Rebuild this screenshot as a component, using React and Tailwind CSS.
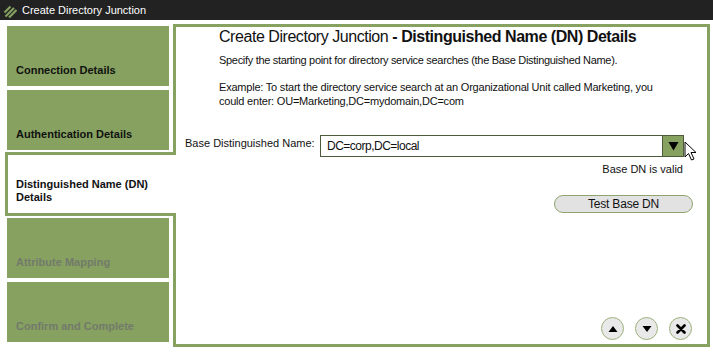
import React from "react";

const F = { fontFamily: '"Liberation Sans", Arial, sans-serif' };

function Logo() {
  return (
    <svg width="15" height="15" viewBox="0 0 15 15" className="shrink-0">
      <g stroke="#86a160" strokeWidth="2.2" strokeLinecap="butt">
        <path d="M1.5 9.5 L7.5 3.5" />
        <path d="M2.5 13.5 L11 5" />
        <path d="M6 14.5 L13.5 7" />
      </g>
    </svg>
  );
}

function Tab({ label, disabled }) {
  return (
    <div
      className={`w-[162px] h-[60px] ml-[2px] bg-[#86a160] flex items-end pl-[9px] pb-[9px] text-[11px] font-bold leading-[13px] ${
        disabled ? "text-[#737a6b]" : "text-[#111]"
      }`}
    >
      {label}
    </div>
  );
}

function Circle({ children }) {
  return (
    <div className="w-[23px] h-[23px] rounded-full bg-[#e9e9e9] border-[1.5px] border-[#9cb27c] flex items-center justify-center">
      {children}
    </div>
  );
}

export default function App() {
  return (
    <div className="w-[713px] h-[353px] bg-white overflow-hidden relative" style={F}>
      <div className="h-[20px] bg-[#222222] flex items-center pl-[3px] gap-[4px]">
        <Logo />
        <span className="text-white text-[11px] leading-none">Create Directory Junction</span>
      </div>
      <div className="flex">
        <div className="w-[168px] ml-[5px] shrink-0 pt-[6px] flex flex-col">
          <Tab label="Connection Details" />
          <div className="h-[4px]" />
          <Tab label="Authentication Details" />
          <div className="mt-[2px] w-[171px] h-[64px] relative z-10 bg-white border-[3px] border-r-0 border-[#86a160] flex items-end pl-[8px] pb-[9px] text-[11px] font-bold leading-[13px] text-[#111]">
            Distinguished Name (DN)
            <br />
            Details
          </div>
          <div className="h-[2px]" />
          <Tab label="Attribute Mapping" disabled />
          <div className="h-[4px]" />
          <Tab label="Confirm and Complete" disabled />
        </div>
        <div className="mt-[4px] w-[537px] h-[323px] border-[3px] border-[#86a160] flex flex-col text-[#111]">
          <div className="pl-[43px] pt-[1px] text-[16px] leading-[18px] tracking-[-0.45px]">
            Create Directory Junction <span className="font-bold">- Distinguished Name (DN) Details</span>
          </div>
          <div className="pl-[43px] mt-[7px] text-[11px] leading-[14px] tracking-[-0.31px]">
            Specify the starting point for directory service searches (the Base Distinguished Name).
          </div>
          <div className="pl-[43px] mt-[13px] text-[11px] leading-[14px] tracking-[-0.21px]">
            Example: To start the directory service search at an Organizational Unit called Marketing, you
            <br />
            could enter: OU=Marketing,DC=mydomain,DC=com
          </div>
          <div className="ml-[9px] w-[499px] mt-[27px]">
            <div className="flex items-start">
              <div className="w-[135px] text-[11px] leading-[14px] pt-[1px]">Base Distinguished Name:</div>
              <div className="flex-1 h-[22px] border border-[#4d5a3c] flex relative">
                <div className="flex-1 pl-[6px] text-[12px] leading-[20px] tracking-[-0.5px]">DC=corp,DC=local</div>
                <div className="w-[21px] h-full bg-[#86a160] border-l border-[#4d5a3c] flex items-center justify-center">
                  <svg width="11" height="10" viewBox="0 0 11 10">
                    <path d="M0.5 1 L10.5 1 L5.5 9.5 Z" fill="#000" />
                  </svg>
                </div>
                <svg
                  width="15"
                  height="22"
                  viewBox="0 0 15 22"
                  className="absolute left-[363px] top-[5px]"
                >
                  <path
                    d="M1 1 L1 16 L4.5 12.5 L7.5 19 L10 18 L7 11.5 L12 11.5 Z"
                    fill="#fff"
                    stroke="#000"
                    strokeWidth="1"
                    strokeLinejoin="round"
                  />
                </svg>
              </div>
            </div>
            <div className="mt-[5px] text-right text-[11px] leading-[14px] pr-[1px]">Base DN is valid</div>
            <div className="mt-[19px] flex justify-end mr-[-9px]">
              <div className="w-[139px] h-[18px] rounded-full bg-[#e2e2e2] border border-[#8fa56e] flex items-center justify-center text-[12px] leading-none tracking-[-0.2px]">
                Test Base DN
              </div>
            </div>
          </div>
          <div className="mt-auto mb-[4px] mr-[15px] flex justify-end gap-[11px]">
            <Circle>
              <svg width="10" height="8" viewBox="0 0 10 8">
                <path d="M0.5 7 L9.5 7 L5 1 Z" fill="#000" />
              </svg>
            </Circle>
            <Circle>
              <svg width="10" height="8" viewBox="0 0 10 8">
                <path d="M0.5 1 L9.5 1 L5 7 Z" fill="#000" />
              </svg>
            </Circle>
            <Circle>
              <svg width="10" height="10" viewBox="0 0 10 10">
                <path d="M1.5 1.5 L8.5 8.5 M8.5 1.5 L1.5 8.5" stroke="#000" strokeWidth="2.6" strokeLinecap="round" />
              </svg>
            </Circle>
          </div>
        </div>
      </div>
    </div>
  );
}
